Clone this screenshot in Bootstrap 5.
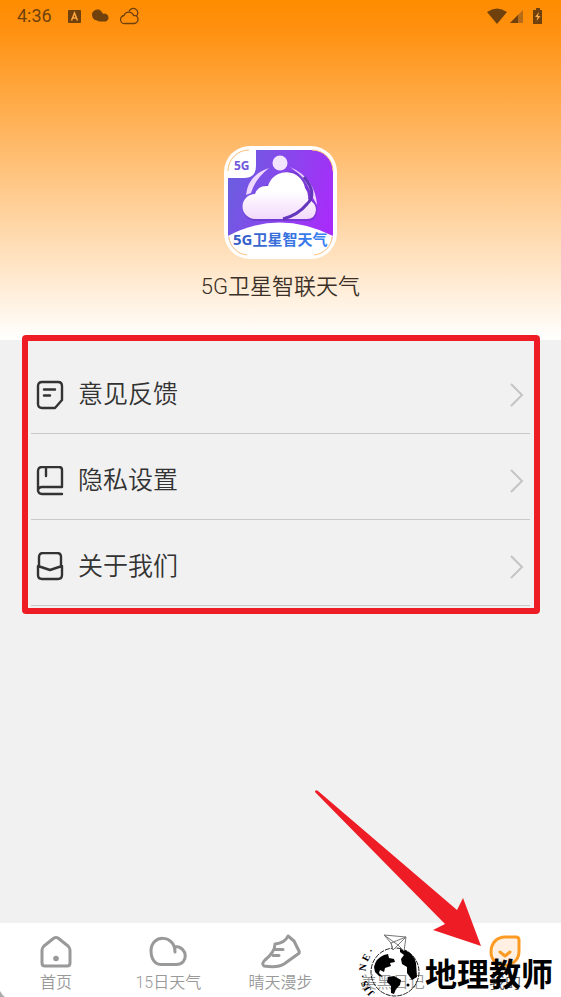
<!DOCTYPE html>
<html lang="zh-CN">
<head>
<meta charset="utf-8">
<meta name="viewport" content="width=device-width, initial-scale=1">
<title>5G卫星智联天气</title>
<link href="https://cdn.jsdelivr.net/npm/bootstrap@5.3.0/dist/css/bootstrap.min.css" rel="stylesheet">
<style>
body{font-family:Roboto,"Noto Sans CJK SC",sans-serif;background:#f1f1f1;color:#333}
.hero{background:linear-gradient(#ff8c00 0,#ff9110 30px,#fff 100%);height:340px}
.status{height:32px;padding:0 17px;color:#70410c;font-size:18px;line-height:32px}
.status-icons{gap:10px;margin-left:16px}
.app-logo{margin-top:114px;width:113px;height:113px}
.app-name{font-size:22px;line-height:32px;margin-top:12px;font-weight:350;color:#3b3028}
.menu{margin:8px 31px 0}
.menu-row{height:86px;border-bottom:1px solid #c9c9c9;padding:8px 5px 0 5px;font-size:25px;font-weight:350;color:#333}
.menu-row svg:first-child{margin-right:14px}
.outline-box{inset:-13px -10px -8px -9px;border:6px solid #ee1c25;border-radius:4px;pointer-events:none}
.tabs{height:74px;font-size:16px;line-height:20px;font-weight:350}
.tab{color:#999;padding-top:11px}
.tab svg{margin-bottom:1px}
.tab-on{color:#555}
.pointer-arrow{right:76px;bottom:47px;pointer-events:none}
.stamp{right:8px;bottom:0;height:66px;color:#000;pointer-events:none}
.stamp-name{font-size:32px;line-height:46px;padding-top:16px;font-weight:700;font-family:"Noto Sans CJK SC",sans-serif}
.screen-corner{left:0;bottom:0}
</style>
<script src="https://cdn.jsdelivr.net/npm/bootstrap@5.3.0/dist/js/bootstrap.bundle.min.js"></script>
</head>
<body>
<div class="d-flex flex-column min-vh-100 position-relative overflow-hidden">
<header class="hero d-flex flex-column">
  <div class="status d-flex align-items-center">
    <span>4:36</span>
    <div class="status-icons d-flex align-items-center">
      <svg width="13" height="13" viewBox="0 0 13 13"><rect width="13" height="13" rx="1" fill="#70410c"/><path d="M3.5 10.5 6.5 3l3 7.500M4.500 8h4" fill="none" stroke="#ffa63c" stroke-width="1.500"/></svg>
      <svg width="19" height="14" viewBox="0 0 19 14"><path d="M6 11A5 5 0 1 1 11 4q1 2 3 1a3.700 3.700 0 0 1 1 7H9Q7 12 6 11Z" fill="#70410c" stroke="#70410c"/></svg>
      <svg width="20" height="18" viewBox="0 0 20 18" fill="none" stroke="#70410c" stroke-width="1.300"><path d="M5 16.500a4 4 0 0 1-1-8 5 5 0 0 1 9.500 0 4 4 0 0 1 1 8Z"/><path d="M9 4.500a4.500 4.500 0 1 1 7 5"/></svg>
    </div>
    <div class="d-flex align-items-center ms-auto">
      <svg width="57" height="18" viewBox="0 0 57 18"><path d="M0 5q10-7 20 0L10 17Z" fill="#70410c"/><path d="M23 16 36 3v13Z" fill="#b56b18"/><path d="M23 16 31 8v8Z" fill="#70410c"/><path d="M46 3h3V1h4v2h2v14h-9Z" fill="#70410c"/><path d="m52 5-4 5h2.500l-1 4 4-5H51Z" fill="#ffab45"/></svg>
    </div>
  </div>
  <svg class="app-logo align-self-center" viewBox="0 0 113 113" role="img" aria-label="5G卫星智天气">
    <defs>
      <linearGradient id="bg" x1="0" y1="0.300" x2="1" y2="0.600"><stop offset="0" stop-color="#6b5ee0"/><stop offset="1" stop-color="#a92cfa"/></linearGradient>
      <linearGradient id="cl" x1="0" y1="0" x2="0" y2="1"><stop offset="0.400" stop-color="#fff"/><stop offset="1" stop-color="#f3d9fb"/></linearGradient>
      <linearGradient id="tx"><stop offset="0" stop-color="#355cc4"/><stop offset="1" stop-color="#3b82f5"/></linearGradient>
      <clipPath id="inner"><rect x="4" y="4" width="105" height="105" rx="21"/></clipPath>
    </defs>
    <rect x="0" y="0" width="113" height="113" rx="26" fill="#fff"/>
    <g clip-path="url(#inner)">
      <rect x="4" y="4" width="105" height="105" fill="url(#bg)"/>
      <path d="M4 90Q55 63 109 90v23H4Z" fill="#fff"/>
      <path d="M4 4h28v16q0 12-12 12H4Z" fill="#fff"/>
    </g>
    <path d="M4 25A21 21 0 0 1 25 4M88 4a21 21 0 0 1 21 21M5 91a20 20 0 0 0 18 18M90 109a20 20 0 0 0 18-18" fill="none" stroke="#ffc879" stroke-width="1"/>
    <path d="M22 49Q24 29 45 22 31 33 27 47Z" fill="#f0d7ff"/>
    <path d="M66 21Q91 32 93 59L88 50Q82 31 66 21Z" fill="#f0d7ff"/>
    <circle cx="56" cy="17" r="7.500" fill="#f3e5ff"/>
    <path d="M32 75a13 13 0 0 1 0-27q4-10 15-9a19 19 0 0 1 37 2q4 5 3 12 7 4 6 12-1 10-9 10Z" fill="#5731b4" opacity=".45"/>
    <path d="M31 73a12.500 12.500 0 0 1 0-25q3-9 13-8a19 19 0 0 1 37 2q4 5 3 11 8 4 8 11-1 9-9 9Z" fill="url(#cl)"/>
    <path d="M80 31Q94 48 83 58 74 69 59 73" fill="none" stroke="#6336bb" stroke-width="3"/>
    <text x="10" y="23.500" font-size="12" font-weight="700" fill="#7056da" font-family="Noto Sans, sans-serif">5G</text>
    <text x="9" y="99" font-size="15" font-weight="700" fill="url(#tx)" font-family="Noto Sans, Noto Sans CJK SC, sans-serif">5G卫星智天气</text>
  </svg>
  <h1 class="app-name text-center mb-0">5G卫星智联天气</h1>
</header>
<main class="flex-grow-1">
  <div class="menu position-relative">
    <a class="menu-row d-flex align-items-center text-decoration-none" href="#feedback">
      <svg width="28" height="30" viewBox="0 0 28 30" fill="none" stroke="#333" stroke-width="2.400" stroke-linecap="round" stroke-linejoin="round"><path d="M6 2h16q4 0 4 4v14l-7 8H6q-4 0-4-4V6q0-4 4-4Z"/><path d="M8 9.500h11M8 15.500h6"/></svg>
      <span>意见反馈</span>
      <svg class="ms-auto" width="16" height="24" viewBox="0 0 16 24" fill="none" stroke="#c4c4c4" stroke-width="2"><path d="m2 1 11 11L2 23"/></svg>
    </a>
    <a class="menu-row d-flex align-items-center text-decoration-none" href="#privacy">
      <svg width="28" height="30" viewBox="0 0 28 30" fill="none" stroke="#333" stroke-width="2.400" stroke-linecap="round" stroke-linejoin="round"><path d="M26 28H6q-4 0-4-4V5q0-4 4-4h17q3 0 3 3v17H6q-4 0-4 4M10 2v8"/></svg>
      <span>隐私设置</span>
      <svg class="ms-auto" width="16" height="24" viewBox="0 0 16 24" fill="none" stroke="#c4c4c4" stroke-width="2"><path d="m2 1 11 11L2 23"/></svg>
    </a>
    <a class="menu-row d-flex align-items-center text-decoration-none" href="#about">
      <svg width="28" height="30" viewBox="0 0 28 30" fill="none" stroke="#333" stroke-width="2.400" stroke-linecap="round" stroke-linejoin="round"><path d="M3 13V5q0-4 4-4h14q4 0 4 4v8M2 14v9q0 4 4 4h16q4 0 4-4v-9l-12 4Z"/></svg>
      <span>关于我们</span>
      <svg class="ms-auto" width="16" height="24" viewBox="0 0 16 24" fill="none" stroke="#c4c4c4" stroke-width="2"><path d="m2 1 11 11L2 23"/></svg>
    </a>
    <div class="outline-box position-absolute"></div>
  </div>
</main>
<nav class="tabs row g-0 bg-white text-center">
  <a class="tab col d-flex flex-column align-items-center text-decoration-none" href="#home">
    <svg width="42" height="38" viewBox="0 0 42 38" fill="none" stroke="#999" stroke-width="3" stroke-linejoin="round"><path d="M7 16q0-2 2-4l10-8q2-1 4 0l10 8q2 2 2 4v13q0 3-3 3H10q-3 0-3-3Z"/><circle cx="21" cy="24.500" r="2.800" fill="#999" stroke="none"/></svg>
    <span>首页</span></a>
  <a class="tab col d-flex flex-column align-items-center text-decoration-none" href="#forecast">
    <svg width="42" height="38" viewBox="0 0 42 38" fill="none" stroke="#999" stroke-width="3" stroke-linecap="round"><path d="M28 18C28 0 4 0 4 17q0 8 5 12 2 1.500 5 1.500h15c13 0 12-18-1-18"/></svg>
    <span>15日天气</span></a>
  <a class="tab col d-flex flex-column align-items-center text-decoration-none" href="#walk">
    <svg width="42" height="38" viewBox="0 0 42 38" fill="none" stroke="#999" stroke-width="3" stroke-linecap="round" stroke-linejoin="round"><path d="M15 10Q25 9 28 2l6 5 5 10q1 2-1 3L24 30Q18 34 4 32 1 30 5 26 15 18 15 10Z"/><path d="M15 15.500h8M13 21.500h6"/></svg>
    <span>晴天漫步</span></a>
  <a class="tab col d-flex flex-column align-items-center text-decoration-none" href="#diary">
    <svg width="42" height="38" aria-hidden="true"></svg>
    <span>美黑日记</span></a>
  <a class="tab tab-on col d-flex flex-column align-items-center text-decoration-none" href="#mine" aria-current="page">
    <svg width="42" height="38" viewBox="0 0 42 38" fill="#fff0e3" stroke="#fb9b24" stroke-width="3" stroke-linecap="round" stroke-linejoin="round"><path d="M21 3h11q3 0 3 3v11c0 19-28 19-28 1C7 9 13 3 21 3Z"/><path d="m16 18 5 4 5-4" fill="none"/></svg>
    <span>我的</span></a>
</nav>
<svg class="pointer-arrow position-absolute" width="175" height="165" viewBox="0 0 175 165"><path d="M5 7Q5 4 8 6L147 125 153 113 171 161 123 145 135 139Z" fill="#ee1c25"/></svg>
<div class="stamp position-absolute d-flex align-items-center">
  <svg width="70" height="66" viewBox="-2 0 70 66">
    <defs><path id="ring" d="M18 62A28 28 0 0 1 30 14"/></defs>
    <circle cx="38" cy="41" r="24" fill="none" stroke="#222" stroke-width="1" stroke-dasharray="5 1"/>
    <path d="M17 36q2-9 10-12l4-1 1 4 5 1 1 3-5 1 1 3-6 2-1 4-4-2-1 3 4 4-4-1-4-4Z"/>
    <path d="m43 18 5 1q9 4 11 13l1 14-5 3-5-7v-6l-5-3-1-5 3-4-4-3Z"/>
    <path d="m31 46 6-1 7 4-1 5-4 4-2 5-3-1v-7l-4-4Z"/><circle cx="51" cy="54" r="1.500"/>
    <g stroke="#777" stroke-width="1" fill="#fff"><path d="m27 4 22 2-2 14-6-6-5 5-2-7Z"/><path d="m27 4 14 10 8-8-15 6 2 7 13-13" fill="none"/></g>
    <text font-size="10" font-weight="700" font-family="Liberation Serif, serif"><textPath href="#ring">JJS · N E ·</textPath></text>
  </svg>
  <span class="stamp-name">地理教师</span>
</div>
<svg class="screen-corner position-absolute" width="8" height="8" viewBox="0 0 8 8"><path d="M0 2q2 4 5 6H0Z" fill="#aaa"/></svg>
</div>
</body>
</html>
